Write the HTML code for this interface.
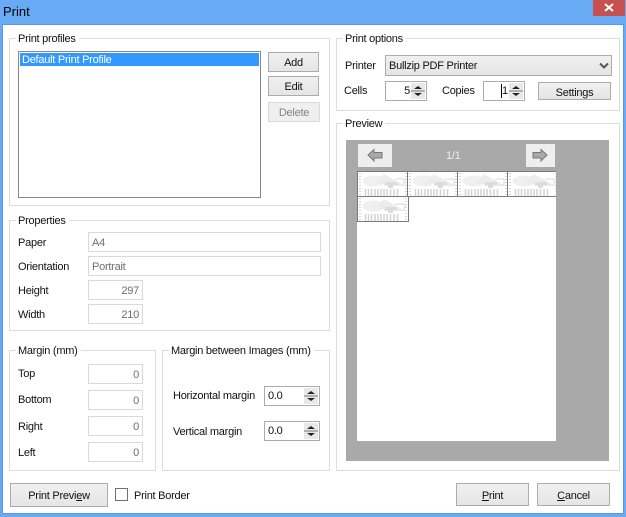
<!DOCTYPE html>
<html><head><meta charset="utf-8">
<style>
html,body{margin:0;padding:0;width:626px;height:517px;overflow:hidden;background:#69aaf5}
*{box-sizing:border-box}
body{font:11px "Liberation Sans",sans-serif;letter-spacing:-.25px;color:#111;position:relative}
.a,.g,.b,.i,.t,.s{position:absolute}
.g{border:1px solid #dcdcdc}
.g>span{position:absolute;left:6px;top:-7px;background:#fff;padding:0 3px 0 2px;line-height:14px;white-space:nowrap}
.b{border:1px solid #acacac;background:linear-gradient(#f0f0f0,#e5e5e5);text-align:center;white-space:nowrap}
.i{border:1px solid #d9d9d9;background:#fff;color:#6d6d6d;padding:0 3px;line-height:20px}
.r{text-align:right}
.t{line-height:14px;white-space:nowrap;margin-top:1px}
.s{border:1px solid #ababab;background:#fff;line-height:18px;padding-left:3px}
.sp{position:absolute;right:1px;top:1px;bottom:1px;width:14px;background:linear-gradient(#e8e8e8 0 47%,#777 47% 53%,#e8e8e8 53%)}
.sp:before,.sp:after{content:"";position:absolute;left:3px;border-left:4px solid transparent;border-right:4px solid transparent}
.sp:before{top:3px;border-bottom:3px solid #222}
.sp:after{bottom:3px;border-top:3px solid #222}
.c{position:absolute;width:52px;height:26px;border:1px solid #7a7a7a;background:#fff}
.c svg{position:absolute;left:1px;top:1px;display:block}
u{text-decoration:underline}
</style></head><body>
<svg width="0" height="0" style="position:absolute"><defs>
<symbol id="th" viewBox="0 0 48 23">
<path d="M1 0V23M47 0V23" stroke="#aaa" stroke-dasharray="1 2" fill="none"/>
<ellipse cx="15" cy="8" rx="11.500" ry="5.500" fill="#f0f0f0"/>
<path d="M15 11L25 1 43 11Z" fill="#ececec"/>
<path d="M25 12H45V6H36" stroke="#d8d8d8" fill="none"/>
<path d="M26 9H38V12H34V15H29V12H26Z" fill="#dcdcdc"/>
<path d="M6.500 16V23M9.500 16V23M12.500 16V23M16 16V23M19 16V23M22 16V23M25 16V23M28 16V23M31.500 16V23M35 16V23M38.500 16V23" stroke="#d4d4d4" stroke-width="1.500"/>
</symbol>
</defs></svg>

<div class="t" style="left:3px;top:3px;font-size:13px;line-height:15px;color:#000;letter-spacing:0">Print</div>
<div class="a" style="left:593px;top:0;width:32px;height:16px;background:#c75050"></div>
<svg class="a" style="left:604px;top:3px" width="10" height="9"><path d="M1 1L9 8M9 1L1 8" stroke="#fff" stroke-width="2"/></svg>
<div class="a" style="left:2px;top:24px;width:622px;height:490px;background:#fff;border:1px solid #5b97dc"></div>

<div class="g" style="left:9px;top:38px;width:321px;height:168px"><span>Print profiles</span></div>
<div class="a" style="left:18px;top:51px;width:243px;height:147px;border:1px solid #828790;background:#fff"></div>
<div class="a" style="left:20px;top:53px;width:239px;height:13px;background:#3399ff;color:#fff;line-height:15px;padding-left:2px">Default Print Profile</div>
<div class="b" style="left:268px;top:52px;width:51px;height:20px;line-height:20px">Add</div>
<div class="b" style="left:268px;top:76px;width:51px;height:20px;line-height:20px">Edit</div>
<div class="b" style="left:268px;top:102px;width:52px;height:20px;line-height:20px;background:#efefef;border-color:#d9d9d9;color:#838383">Delete</div>

<div class="g" style="left:9px;top:220px;width:321px;height:111px"><span>Properties</span></div>
<div class="t" style="left:18px;top:235px">Paper</div>
<div class="i" style="left:88px;top:232px;width:233px;height:20px">A4</div>
<div class="t" style="left:18px;top:259px">Orientation</div>
<div class="i" style="left:88px;top:256px;width:233px;height:20px">Portrait</div>
<div class="t" style="left:18px;top:283px">Height</div>
<div class="i r" style="left:88px;top:280px;width:55px;height:20px">297</div>
<div class="t" style="left:18px;top:307px">Width</div>
<div class="i r" style="left:88px;top:304px;width:55px;height:20px">210</div>

<div class="g" style="left:9px;top:350px;width:147px;height:121px"><span>Margin (mm)</span></div>
<div class="t" style="left:18px;top:366px">Top</div>
<div class="i r" style="left:88px;top:364px;width:55px;height:20px">0</div>
<div class="t" style="left:18px;top:392px">Bottom</div>
<div class="i r" style="left:88px;top:390px;width:55px;height:20px">0</div>
<div class="t" style="left:18px;top:419px">Right</div>
<div class="i r" style="left:88px;top:416px;width:55px;height:20px">0</div>
<div class="t" style="left:18px;top:445px">Left</div>
<div class="i r" style="left:88px;top:442px;width:55px;height:20px">0</div>

<div class="g" style="left:162px;top:350px;width:168px;height:121px"><span>Margin between Images (mm)</span></div>
<div class="t" style="left:173px;top:388px">Horizontal margin</div>
<div class="s" style="left:264px;top:386px;width:56px;height:20px;color:#111">0.0<div class="sp"></div></div>
<div class="t" style="left:173px;top:424px">Vertical margin</div>
<div class="s" style="left:264px;top:421px;width:56px;height:20px;color:#111">0.0<div class="sp"></div></div>

<div class="b" style="left:10px;top:483px;width:98px;height:24px;line-height:24px">Print Previ<u>e</u>w</div>
<div class="a" style="left:115px;top:488px;width:13px;height:13px;border:1px solid #707070;background:#fff"></div>
<div class="t" style="left:134px;top:488px">Print Border</div>
<div class="b" style="left:456px;top:483px;width:73px;height:23px;line-height:24px"><u>P</u>rint</div>
<div class="b" style="left:537px;top:483px;width:73px;height:23px;line-height:24px"><u>C</u>ancel</div>

<div class="g" style="left:336px;top:38px;width:284px;height:73px"><span>Print options</span></div>
<div class="t" style="left:345px;top:58px">Printer</div>
<div class="b" style="left:385px;top:55px;width:227px;height:21px;line-height:20px;text-align:left;padding-left:3px">Bullzip PDF Printer</div>
<svg class="a" style="left:599px;top:62px" width="10" height="8"><path d="M1 1.500L5 5.500 9 1.500" stroke="#555" stroke-width="2" fill="none"/></svg>
<div class="t" style="left:344px;top:83px">Cells</div>
<div class="s r" style="left:385px;top:81px;width:42px;height:20px;padding-right:16px;color:#111">5<div class="sp"></div></div>
<div class="t" style="left:442px;top:83px">Copies</div>
<div class="s" style="left:483px;top:81px;width:42px;height:20px;color:#111;padding-left:0"><span class="a" style="left:17px;top:2px;width:1px;height:14px;background:#000"></span><span class="a" style="left:18px;top:0">1</span><div class="sp"></div></div>
<div class="b" style="left:538px;top:82px;width:73px;height:18px;line-height:20px">Settings</div>

<div class="g" style="left:336px;top:123px;width:284px;height:348px"><span>Preview</span></div>
<div class="a" style="left:346px;top:140px;width:263px;height:321px;background:#a9a9a9"></div>
<div class="a" style="left:358px;top:144px;width:34px;height:23px;background:#eee"></div>
<svg class="a" style="left:367px;top:148px" width="16" height="14"><path d="M1 7L7 1.500V4.500H15V10H7V13Z" fill="#a9a9a9" stroke="#777"/></svg>
<div class="a" style="left:526px;top:144px;width:29px;height:23px;background:#eee"></div>
<svg class="a" style="left:532px;top:148px" width="16" height="14"><path d="M15 7L9 1.500V4.500H1V10H9V13Z" fill="#a9a9a9" stroke="#777"/></svg>
<div class="t" style="left:446px;top:148px;color:#eee">1/1</div>
<div class="a" style="left:357px;top:171px;width:199px;height:270px;background:#fff"></div>
<div class="c" style="left:357px;top:171px"><svg width="48" height="23"><use href="#th"/></svg></div>
<div class="c" style="left:407px;top:171px"><svg width="48" height="23"><use href="#th"/></svg></div>
<div class="c" style="left:457px;top:171px"><svg width="48" height="23"><use href="#th"/></svg></div>
<div class="c" style="left:507px;top:171px;width:49px;border-right:0"><svg width="48" height="23"><use href="#th"/></svg></div>
<div class="c" style="left:357px;top:196px"><svg width="48" height="23"><use href="#th"/></svg></div>
</body></html>
